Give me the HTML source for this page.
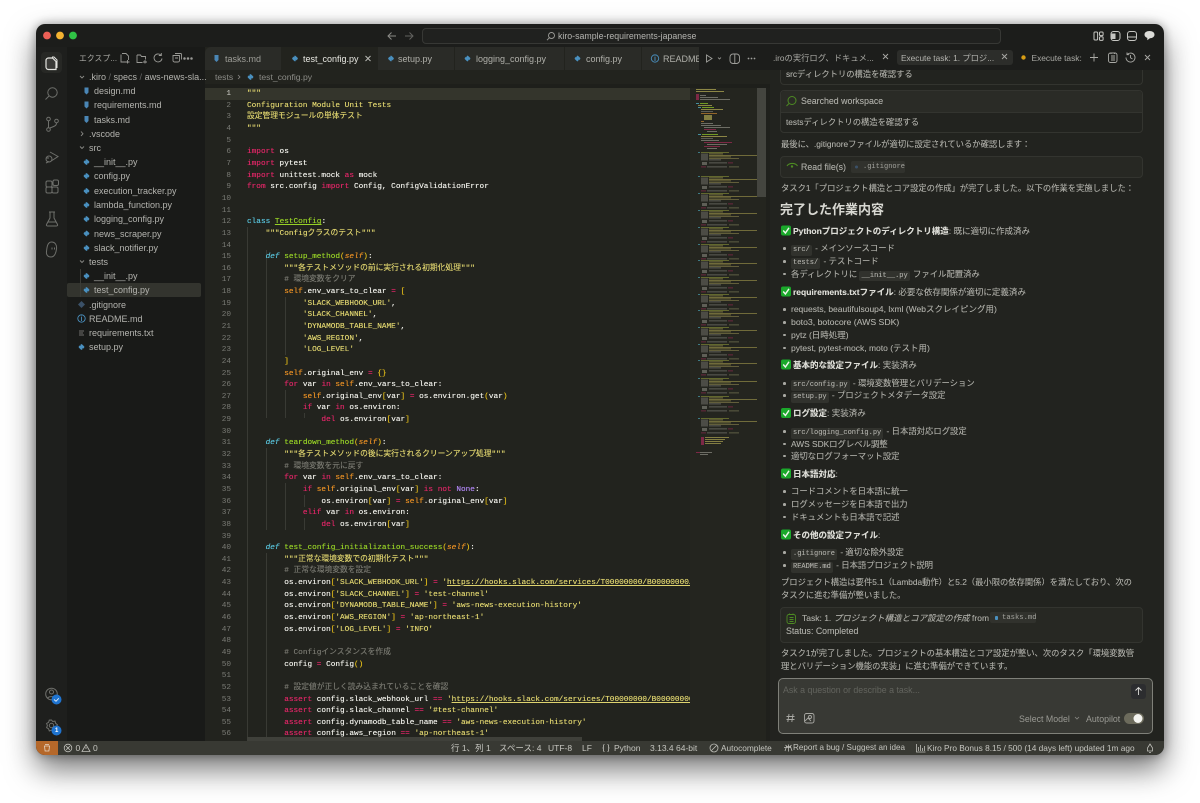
<!DOCTYPE html>
<html lang="ja"><head><meta charset="utf-8"><title>Kiro</title>
<style>
html,body{margin:0;padding:0;background:#fff;width:1200px;height:803px;overflow:hidden}
body{font-family:"Liberation Sans","Noto Sans CJK JP",sans-serif;position:relative}
#w{position:absolute;left:36px;top:24px;width:1128px;height:731px;border-radius:9px;box-shadow:0 14px 30px rgba(0,0,0,.55),0 0 10px rgba(0,0,0,.35);filter:blur(.3px)}
#c{position:absolute;left:-36px;top:-24px;width:1200px;height:803px;clip-path:inset(24px 36px 48px 36px round 9px)}
.a{position:absolute}
.t{position:absolute;white-space:nowrap;line-height:12px}
.f{font-size:9px;color:#b4b4af;height:12px}
.n{font-size:9px;color:#b0b0aa}
.tb{position:absolute;top:47px;height:23px;background:#2a2b27}
pre{margin:0;font-family:"Liberation Mono","Noto Sans CJK JP",monospace;font-size:7.75px;line-height:11.636px;position:absolute;top:89.2px}
#code{left:247px;color:#f0f0ea;width:443px;overflow:hidden;height:651px;text-shadow:0 0 .35px currentColor}
#ln{left:205px;width:26px;text-align:right;color:#7a7b75}
.k{color:#dc2665}.d{color:#58c2da;font-style:italic}.y{color:#58c2da}.g{color:#96d026}.s{color:#ded36e}.o{color:#e88f24}.p{color:#e88f24;font-style:italic}.m{color:#77776f}.b{color:#e0ba18}.v{color:#ad84f0}.u{text-decoration:underline}
.c{position:absolute;white-space:nowrap;line-height:12px;font-size:8.3px;color:#a8a8a2;left:781px;height:12px;text-shadow:0 0 .25px currentColor}
.c b{color:#dcdcd6;font-weight:700}
.h{left:793px;font-size:8.5px}
.l{left:791px;font-size:8.35px}
.l:before{content:"";position:absolute;left:-8px;top:5px;width:2.6px;height:2.6px;border-radius:50%;background:#a8a8a2}
.e{display:inline-block;font-family:"Liberation Mono",monospace;font-size:7px;background:#31322d;color:#a8a8a2;padding:0 2px;border-radius:2px;line-height:10.500px;margin-right:1px}
.st{position:absolute;top:742px;line-height:12px;font-size:8.5px;color:#c6c6c0;white-space:nowrap}
.ig{position:absolute;width:1px;background:#393a34}
.bx{position:absolute;left:780px;width:361px;border:1px solid #33342f;border-radius:4px;background:#272823}
svg{position:absolute;overflow:visible}
</style></head><body>
<div id="w"><div id="c">
<!-- base -->
<div class="a" style="left:36px;top:24px;width:1128px;height:731px;background:#1c1d1b"></div>
<div class="a" style="left:36px;top:47px;width:31px;height:694px;background:#1e1f1d"></div>
<div class="a" style="left:67px;top:47px;width:138px;height:694px;background:#191a18"></div>
<div class="a" style="left:205px;top:47px;width:565px;height:694px;background:#22231e"></div>
<div class="a" style="left:690px;top:84px;width:80px;height:657px;background:#24251f"></div>
<div class="a" style="left:766px;top:84px;width:4px;height:657px;background:#1f201c"></div>
<div class="a" style="left:770px;top:47px;width:394px;height:694px;background:#22231f"></div>

<!-- title bar -->
<svg style="left:0;top:0" width="1200" height="60">
<circle cx="47" cy="35.500" r="3.900" fill="#ec5f56"/><circle cx="60" cy="35.500" r="3.900" fill="#f4b231"/><circle cx="73" cy="35.500" r="3.900" fill="#30c346"/>
<path d="M396 36h-7.500M391.500 32.500l-3.500 3.500 3.500 3.500" fill="none" stroke="#8a8a86" stroke-width="1"/>
<path d="M405 36h7.500M409.500 32.500l3.500 3.500-3.500 3.500" fill="none" stroke="#62625f" stroke-width="1"/>
<rect x="422.500" y="28.500" width="578" height="15" rx="3.500" fill="#20211f" stroke="#373835"/>
<circle cx="551.500" cy="35.500" r="3" fill="none" stroke="#9a9a96" stroke-width=".9"/><path d="M549.300 37.800l-2.300 2.400" stroke="#9a9a96" stroke-width=".9"/>
<g fill="none" stroke="#c6c6c2" stroke-width="1">
<rect x="1094" y="32" width="3.600" height="8" rx="1"/><rect x="1099.500" y="32" width="3.600" height="3.600" rx="1"/><rect x="1099.500" y="36.800" width="3.600" height="3.600" rx="1"/>
<rect x="1111" y="31.500" width="9" height="9" rx="2.500"/><path d="M1111.500 33.500h4v5.500h-4z" fill="#c6c6c2" stroke="none"/>
<rect x="1127.500" y="31.500" width="9" height="9" rx="2.500"/><path d="M1127.500 37h9"/>
</g>
<path d="M1149.500 31c3 0 5 1.500 5 3.600s-2 3.600-4.600 3.600l-2.600 2v-2.300c-1.700-.6-2.800-1.800-2.800-3.300 0-2.100 2-3.600 5-3.600z" fill="#dcdcd8"/>
</svg>
<div class="t" style="left:558px;top:29.500px;font-size:8.800px;color:#b4b4b0">kiro-sample-requirements-japanese</div>

<!-- activity bar -->
<div class="a" style="left:41px;top:52px;width:21px;height:21px;border-radius:4px;background:#272825"></div>
<svg style="left:0;top:0" width="70" height="760" fill="none" stroke="#6f706c" stroke-width="1">
<path d="M49 58h3.500l3.500 3.500v8h-7.500a2.500 2.500 0 0 1-2.500-2.500v-6.500a2.500 2.500 0 0 1 2.500-2.500z" stroke="#e4e4e0" stroke-width="1.200" fill="#3a3a37"/><path d="M52 57h2l3 3v8" stroke="#e4e4e0"/>
<circle cx="52.500" cy="92.500" r="4.700"/><path d="M49 96l-3.500 3.500"/>
<circle cx="48.500" cy="119" r="1.800"/><circle cx="48.500" cy="129.500" r="1.800"/><circle cx="56.500" cy="121" r="1.800"/><path d="M48.500 121v6.500M56.500 123c0 3-3 3.500-6.500 5"/>
<path d="M50 152l8 4.500-6 4M46 158h3M46 163l3-1.500"/><circle cx="49" cy="159" r="3"/>
<rect x="46" y="181" width="6" height="6" rx="1.500"/><rect x="52" y="187" width="6" height="6" rx="1.500"/><rect x="46" y="187" width="6" height="6" rx="1.500"/><rect x="53" y="180" width="5.500" height="5.500" rx="1.500"/>
<path d="M50 212v6l-3.500 6.500c-.4 1 .2 1.500 1 1.500h9c.8 0 1.400-.5 1-1.500l-3.500-6.500v-6M49 212h6M47.500 222h9"/>
<path d="M51.500 242c3.600 0 5.500 3 5 7-.5 3.500-1.500 8-5.500 8-3 0-5-2-4.500-5.500.4-3.500.8-9.500 5-9.500z"/><path d="M52 247.500v2M54.500 247.500v2"/>
<circle cx="51.500" cy="694" r="5.800"/><circle cx="51.500" cy="692" r="2"/><path d="M47.500 698.500c.6-2.500 7.400-2.500 8 0"/>
<circle cx="51.500" cy="725.500" r="2.200"/><path d="M51.500 720l1.200 1.500 2.300-.4.600 2.200 1.800 1.500-1 2 .5 2.300-2.300.4-1.400 1.600-1.800-.9-2.100.8-.7-2.200-2-1.200.8-2.100-.8-2 2-1.200.7-2.200z"/>
</svg>
<svg style="left:0;top:0" width="70" height="760">
<circle cx="56.500" cy="699.500" r="5" fill="#1f74d0"/><path d="M54 699.500l2 1.800 2.800-3" stroke="#e8eef5" fill="none" stroke-width=".9"/>
<circle cx="56.500" cy="730.500" r="5" fill="#1f74d0"/>
</svg>
<div class="t" style="left:55px;top:724.500px;font-size:6px;color:#fff;font-weight:700">1</div>

<!-- sidebar -->
<div class="t" style="left:79px;top:53px;font-size:7.800px;color:#aaaaa5;letter-spacing:.1px">エクスプ...</div>
<svg style="left:0;top:0" width="205" height="360" fill="none" stroke="#9a9a96" stroke-width=".9">
<path d="M122 53.500h4l2.500 2.500v4M121 54.500v7.500h5M127.500 60v3.500M125.500 62h4"/>
<path d="M137 55h3.500l1 1.500h4v3M137 55v7.500h5.500M145 60v3.500M143 62h4"/>
<path d="M161 55.200a4 4 0 1 0 1 3.300M161.300 53v2.500h-2.500"/>
<path d="M173 55.500h6.500v5a1.500 1.500 0 0 1-1.500 1.500h-3.500a1.500 1.500 0 0 1-1.500-1.500zM175 53.500h5.500a1 1 0 0 1 1 1v5M175 58h3"/>
<path d="M80 76l2 2 2-2M81 131.500l2 2.200-2 2.200M80 146.500l2 2 2-2M80 260.500l2 2 2-2" stroke="#8a8a86"/>
<circle cx="184.500" cy="58.500" r=".8" fill="#9a9a96"/><circle cx="188" cy="58.500" r=".8" fill="#9a9a96"/><circle cx="191.500" cy="58.500" r=".8" fill="#9a9a96"/>
</svg>
<div class="a" style="left:67px;top:283px;width:134px;height:14px;background:#33342e;border-radius:2px"></div>
<div class="a" style="left:80px;top:269px;width:1px;height:28px;background:#3b3c37"></div>
<div class="t f" style="left:89px;top:71px">.kiro<span style="color:#666"> / </span>specs<span style="color:#666"> / </span>aws-news-sla...</div>
<div class="t f" style="left:94px;top:85px">design.md</div>
<div class="t f" style="left:94px;top:99px">requirements.md</div>
<div class="t f" style="left:94px;top:113.500px">tasks.md</div>
<div class="t f" style="left:89px;top:128px">.vscode</div>
<div class="t f" style="left:89px;top:142px">src</div>
<div class="t f" style="left:94px;top:156px">__init__.py</div>
<div class="t f" style="left:94px;top:170px">config.py</div>
<div class="t f" style="left:94px;top:185px">execution_tracker.py</div>
<div class="t f" style="left:94px;top:199px">lambda_function.py</div>
<div class="t f" style="left:94px;top:213px">logging_config.py</div>
<div class="t f" style="left:94px;top:227.500px">news_scraper.py</div>
<div class="t f" style="left:94px;top:242px">slack_notifier.py</div>
<div class="t f" style="left:89px;top:256px">tests</div>
<div class="t f" style="left:94px;top:270px">__init__.py</div>
<div class="t f" style="left:94px;top:284px">test_config.py</div>
<div class="t f" style="left:89px;top:298.500px">.gitignore</div>
<div class="t f" style="left:89px;top:312.500px">README.md</div>
<div class="t f" style="left:89px;top:327px">requirements.txt</div>
<div class="t f" style="left:89px;top:341px">setup.py</div>
<svg style="left:0;top:0;width:0;height:0"><defs>
<g id="py"><rect x="-2.300" y="-2.300" width="4.600" height="4.600" rx="1" transform="rotate(45)" fill="#4a90bf"/><circle cx="-.9" cy="-1.700" r=".4" fill="#1c2a33"/><circle cx=".9" cy="1.700" r=".4" fill="#1c2a33"/></g>
<path id="md" d="M-2-3.500h4v5l-2 2-2-2z" fill="#4a86b5"/>
<g id="ok"><rect x="0" y="0" width="10" height="10" rx="2" fill="#1ba82b"/><path d="M2.200 5l2.200 2.500 3.600-5.200" fill="none" stroke="#f2f6ef" stroke-width="1.400"/></g>
</defs></svg>
<svg style="left:0;top:0" width="205" height="360">
<use href="#md" x="86.500" y="91"/><use href="#md" x="86.500" y="105"/><use href="#md" x="86.500" y="119.500"/>
<use href="#py" x="86.500" y="162"/><use href="#py" x="86.500" y="176"/><use href="#py" x="86.500" y="191"/><use href="#py" x="86.500" y="205"/><use href="#py" x="86.500" y="219"/><use href="#py" x="86.500" y="233.500"/><use href="#py" x="86.500" y="248"/><use href="#py" x="86.500" y="276"/><use href="#py" x="86.500" y="290"/><use href="#py" x="81.500" y="347"/>
<path d="M81.500 301l3.500 3.500-3.500 3.500-3.500-3.500z" fill="#3b5168"/>
<circle cx="81.500" cy="318.500" r="3.700" fill="none" stroke="#4a90bf" stroke-width=".9"/><path d="M81.500 317v4M81.500 315.800v.6" stroke="#4a90bf" stroke-width=".9"/>
<path d="M79 331h5M79 333h4M79 335h5" stroke="#8a8a86" stroke-width=".8"/>
</svg>

<!-- tabs -->
<div class="tb" style="left:205px;width:76px;border-radius:6px 0 0 0"></div>
<div class="tb" style="left:281px;width:97px;background:#22231e"></div>
<div class="tb" style="left:378px;width:76px"></div>
<div class="tb" style="left:455px;width:109px"></div>
<div class="tb" style="left:565px;width:76px"></div>
<div class="tb" style="left:642px;width:57px"></div>
<div class="a" style="left:699px;top:47px;width:71px;height:23px;background:#1c1d1b"></div>
<div class="t n" style="left:225px;top:52.500px;color:#9e9e98">tasks.md</div>
<div class="t n" style="left:303px;top:52.500px;color:#e8e8e2">test_config.py</div>
<div class="t n" style="left:398px;top:52.500px">setup.py</div>
<div class="t n" style="left:476px;top:52.500px">logging_config.py</div>
<div class="t n" style="left:586px;top:52.500px">config.py</div>
<div class="t n" style="left:663px;top:52.500px;width:36px;overflow:hidden">README.md</div>
<svg style="left:0;top:0" width="770" height="90">
<use href="#md" x="216.500" y="58.500"/><use href="#py" x="295" y="58.500"/><use href="#py" x="391" y="58.500"/><use href="#py" x="467.500" y="58.500"/><use href="#py" x="577.500" y="58.500"/>
<circle cx="655" cy="58.500" r="3.700" fill="none" stroke="#4a90bf" stroke-width=".9"/><path d="M655 57v4M655 55.800v.6" stroke="#4a90bf" stroke-width=".9"/>
<path d="M365.500 56l5 5M370.500 56l-5 5" stroke="#c0c0ba" stroke-width=".9"/>
<path d="M706.500 55l5.500 3.500-5.500 3.500z" fill="none" stroke="#a0a09c" stroke-width=".9"/><path d="M718 57.500l1.500 1.500 1.500-1.500" fill="none" stroke="#a0a09c" stroke-width=".8"/>
<rect x="730" y="54" width="9.500" height="9.500" rx="3" fill="none" stroke="#a0a09c" stroke-width=".9"/><path d="M734.800 54v9.500" stroke="#a0a09c" stroke-width=".9"/>
<circle cx="748.500" cy="58.500" r=".9" fill="#a0a09c"/><circle cx="751.500" cy="58.500" r=".9" fill="#a0a09c"/><circle cx="754.500" cy="58.500" r=".9" fill="#a0a09c"/>
<path d="M238 75l2 2-2 2" fill="none" stroke="#8a8a86" stroke-width=".8"/>
<use href="#py" x="250.500" y="77"/>
</svg>
<div class="t" style="left:215px;top:71px;font-size:8.600px;color:#8c8c87">tests</div>
<div class="t" style="left:259px;top:71px;font-size:8.600px;color:#8c8c87">test_config.py</div>
<div class="a" style="left:205px;top:84px;width:565px;height:4px;background:#1e1f1b"></div>

<!-- editor -->
<div class="a" style="left:205px;top:88px;width:485px;height:12px;background:#34352c"></div>
<div class="ig" style="left:247px;top:227px;height:513px"></div>
<div class="ig" style="left:266px;top:250px;height:168px"></div>
<div class="ig" style="left:266px;top:448px;height:82px"></div>
<div class="ig" style="left:266px;top:553px;height:187px"></div>
<div class="ig" style="left:285px;top:297px;height:58px"></div>
<div class="ig" style="left:285px;top:390px;height:28px"></div>
<div class="ig" style="left:304px;top:413px;height:5px"></div>
<div class="ig" style="left:285px;top:483px;height:47px"></div>
<div class="ig" style="left:304px;top:495px;height:12px"></div>
<div class="ig" style="left:304px;top:518px;height:12px"></div>
<pre id="ln"><span style="color:#d0d0ca">1</span>
2
3
4
5
6
7
8
9
10
11
12
13
14
15
16
17
18
19
20
21
22
23
24
25
26
27
28
29
30
31
32
33
34
35
36
37
38
39
40
41
42
43
44
45
46
47
48
49
50
51
52
53
54
55
56</pre>
<pre id="code"><span class="s">"""
Configuration Module Unit Tests
設定管理モジュールの単体テスト
"""</span>

<span class="k">import</span> os
<span class="k">import</span> pytest
<span class="k">import</span> unittest.mock <span class="k">as</span> mock
<span class="k">from</span> src.config <span class="k">import</span> Config, ConfigValidationError


<span class="y">class</span> <span class="g u">TestConfig</span>:
    <span class="s">"""Configクラスのテスト"""</span>

    <span class="d">def</span> <span class="g">setup_method</span><span class="b">(</span><span class="p">self</span><span class="b">)</span>:
        <span class="s">"""各テストメソッドの前に実行される初期化処理"""</span>
        <span class="m"># 環境変数をクリア</span>
        <span class="o">self</span>.env_vars_to_clear <span class="k">=</span> <span class="b">[</span>
            <span class="s">'SLACK_WEBHOOK_URL'</span>,
            <span class="s">'SLACK_CHANNEL'</span>,
            <span class="s">'DYNAMODB_TABLE_NAME'</span>,
            <span class="s">'AWS_REGION'</span>,
            <span class="s">'LOG_LEVEL'</span>
        <span class="b">]</span>
        <span class="o">self</span>.original_env <span class="k">=</span> <span class="b">{}</span>
        <span class="k">for</span> var <span class="k">in</span> <span class="o">self</span>.env_vars_to_clear:
            <span class="o">self</span>.original_env<span class="b">[</span>var<span class="b">]</span> <span class="k">=</span> os.environ.get<span class="b">(</span>var<span class="b">)</span>
            <span class="k">if</span> var <span class="k">in</span> os.environ:
                <span class="k">del</span> os.environ<span class="b">[</span>var<span class="b">]</span>

    <span class="d">def</span> <span class="g">teardown_method</span><span class="b">(</span><span class="p">self</span><span class="b">)</span>:
        <span class="s">"""各テストメソッドの後に実行されるクリーンアップ処理"""</span>
        <span class="m"># 環境変数を元に戻す</span>
        <span class="k">for</span> var <span class="k">in</span> <span class="o">self</span>.env_vars_to_clear:
            <span class="k">if</span> <span class="o">self</span>.original_env<span class="b">[</span>var<span class="b">]</span> <span class="k">is not</span> <span class="v">None</span>:
                os.environ<span class="b">[</span>var<span class="b">]</span> <span class="k">=</span> <span class="o">self</span>.original_env<span class="b">[</span>var<span class="b">]</span>
            <span class="k">elif</span> var <span class="k">in</span> os.environ:
                <span class="k">del</span> os.environ<span class="b">[</span>var<span class="b">]</span>

    <span class="d">def</span> <span class="g">test_config_initialization_success</span><span class="b">(</span><span class="p">self</span><span class="b">)</span>:
        <span class="s">"""正常な環境変数での初期化テスト"""</span>
        <span class="m"># 正常な環境変数を設定</span>
        os.environ<span class="b">[</span><span class="s">'SLACK_WEBHOOK_URL'</span><span class="b">]</span> <span class="k">=</span> <span class="s">'<span class="u">https://hooks.slack.com/services/T00000000/B00000000/XXXXXXXX</span>'</span>
        os.environ<span class="b">[</span><span class="s">'SLACK_CHANNEL'</span><span class="b">]</span> <span class="k">=</span> <span class="s">'test-channel'</span>
        os.environ<span class="b">[</span><span class="s">'DYNAMODB_TABLE_NAME'</span><span class="b">]</span> <span class="k">=</span> <span class="s">'aws-news-execution-history'</span>
        os.environ<span class="b">[</span><span class="s">'AWS_REGION'</span><span class="b">]</span> <span class="k">=</span> <span class="s">'ap-northeast-1'</span>
        os.environ<span class="b">[</span><span class="s">'LOG_LEVEL'</span><span class="b">]</span> <span class="k">=</span> <span class="s">'INFO'</span>

        <span class="m"># Configインスタンスを作成</span>
        config <span class="k">=</span> Config<span class="b">()</span>

        <span class="m"># 設定値が正しく読み込まれていることを確認</span>
        <span class="k">assert</span> config.slack_webhook_url <span class="k">==</span> <span class="s">'<span class="u">https://hooks.slack.com/services/T00000000/B00000000/XXXXXXXX</span>'</span>
        <span class="k">assert</span> config.slack_channel <span class="k">==</span> <span class="s">'#test-channel'</span>
        <span class="k">assert</span> config.dynamodb_table_name <span class="k">==</span> <span class="s">'aws-news-execution-history'</span>
        <span class="k">assert</span> config.aws_region <span class="k">==</span> <span class="s">'ap-northeast-1'</span></pre>
<div class="a" style="left:247px;top:737px;width:335px;height:4px;background:#3f403a"></div>

<!-- minimap -->
<svg style="left:0;top:0" width="770" height="480">
<defs><g id="mb">
<rect x="698" y="0" width="2" height=".8" fill="#52b9d0"/><rect x="701" y="0" width="28" height=".8" fill="#8f9a3a"/>
<rect x="701" y="1.500" width="7" height="7" fill="#5c5c55"/>
<rect x="709" y="1.500" width="14" height=".8" fill="#b5ac55"/><rect x="709" y="3" width="48" height=".8" fill="#a8a050"/>
<rect x="709" y="4.500" width="22" height=".8" fill="#a8a050"/><rect x="709" y="6" width="30" height=".8" fill="#8f8a50"/>
<rect x="709" y="7.500" width="12" height=".8" fill="#8a8a80"/>
<rect x="702" y="10" width="5" height="3" fill="#77776e"/><rect x="709" y="10.500" width="18" height=".8" fill="#8a8a80"/><rect x="728" y="10.500" width="5" height=".8" fill="#a02a55"/>
<rect x="701" y="14.500" width="5" height=".8" fill="#a02a55"/><rect x="707" y="14.500" width="20" height=".8" fill="#8a8a80"/><rect x="729" y="14.500" width="10" height=".8" fill="#8a8a60"/>
</g></defs>
<g opacity=".72">
<rect x="696" y="89" width="20" height="1" fill="#b5ac55"/><rect x="696" y="91" width="28" height="1" fill="#b5ac55"/>
<rect x="696" y="94" width="3" height="5" fill="#a02a55"/><rect x="700" y="95" width="6" height="1" fill="#8a8a80"/><rect x="700" y="97" width="18" height="1" fill="#8a8a80"/><rect x="696" y="99" width="3" height="1" fill="#a02a55"/><rect x="700" y="99" width="30" height="1" fill="#8a8a80"/>
<rect x="696" y="103" width="3" height="1" fill="#52b9d0"/><rect x="700" y="103" width="8" height="1" fill="#8fc824"/>
<rect x="698" y="105" width="14" height="1" fill="#b5ac55"/><rect x="698" y="107" width="3" height="1" fill="#52b9d0"/><rect x="702" y="107" width="12" height="1" fill="#8fc824"/>
<rect x="701" y="109" width="22" height="1" fill="#b5ac55"/><rect x="701" y="111" width="12" height="1" fill="#71716a"/><rect x="701" y="113" width="16" height="1" fill="#c08030"/>
<rect x="704" y="115" width="8" height="5" fill="#a8a050"/><rect x="701" y="121" width="3" height="1" fill="#c08030"/><rect x="701" y="123" width="12" height="1" fill="#8a8a80"/><rect x="701" y="125" width="20" height="1" fill="#8a8a80"/><rect x="704" y="127" width="26" height="1" fill="#8a8a80"/><rect x="704" y="129" width="12" height="1" fill="#a02a55"/><rect x="707" y="131" width="10" height="1" fill="#8a8a80"/>
<rect x="698" y="134" width="3" height="1" fill="#52b9d0"/><rect x="702" y="134" width="16" height="1" fill="#8fc824"/><rect x="701" y="136" width="26" height="1" fill="#b5ac55"/><rect x="701" y="138" width="12" height="1" fill="#71716a"/><rect x="701" y="140" width="18" height="1" fill="#8a8a80"/><rect x="704" y="142" width="28" height="1" fill="#a02a55"/><rect x="707" y="144" width="20" height="1" fill="#8a8a80"/><rect x="704" y="146" width="16" height="1" fill="#a02a55"/><rect x="707" y="148" width="10" height="1" fill="#8a8a80"/>
<use href="#mb" y="152"/><use href="#mb" y="176"/><use href="#mb" y="193"/><use href="#mb" y="210"/><use href="#mb" y="227"/><use href="#mb" y="244"/><use href="#mb" y="260"/><use href="#mb" y="277"/><use href="#mb" y="294"/><use href="#mb" y="310"/><use href="#mb" y="327"/><use href="#mb" y="344"/><use href="#mb" y="360"/><use href="#mb" y="378"/><use href="#mb" y="396"/><use href="#mb" y="418"/>
<rect x="701" y="437" width="3" height="8" fill="#a02a55"/><rect x="705" y="437" width="24" height="1" fill="#a8a050"/><rect x="705" y="439" width="20" height="1" fill="#a8a050"/><rect x="705" y="441" width="18" height="1" fill="#a8a050"/><rect x="705" y="443" width="16" height="1" fill="#a8a050"/>
<rect x="696" y="452" width="4" height="1" fill="#a02a55"/><rect x="700" y="452" width="12" height="1" fill="#8a8a80"/><rect x="700" y="454" width="8" height="1" fill="#8a8a80"/>
</g>
<rect x="757" y="88" width="9" height="109" fill="#44453f"/>
</svg>

<!-- chat tabs -->
<div class="a" style="left:770px;top:47px;width:394px;height:23px;background:#1c1d1b"></div>
<div class="a" style="left:897px;top:50px;width:116px;height:15px;border-radius:3px;background:#2c2d2a"></div>
<div class="t" style="left:773px;top:51.500px;font-size:8.300px;color:#a9a9a4">.iroの実行ログ、ドキュメ...</div>
<div class="t" style="left:901px;top:51.500px;font-size:8.300px;color:#b4b4af">Execute task: 1. プロジ...</div>
<div class="t" style="left:1031.500px;top:51.500px;font-size:8.400px;color:#a9a9a4">Execute task:</div>
<svg style="left:0;top:0" width="1164" height="80" fill="none" stroke="#aaaaa6" stroke-width=".9">
<path d="M883 54l5 5M888 54l-5 5M1002 54l5 5M1007 54l-5 5"/>
<circle cx="1023.500" cy="57.500" r="2.200" fill="#d69c14" stroke="none"/>
<path d="M1094 53.500v8M1090 57.500h8"/>
<rect x="1108.500" y="53" width="8.500" height="9.500" rx="2"/><path d="M1111 56h4M1111 58h4M1111 60h4M1111 52.500v1.500M1114.500 52.500v1.500"/>
<path d="M1126 57.500a4.500 4.500 0 1 0 1.500-3.300M1127 52.500v2.200h2.200M1130.500 55v2.800l2 1.200"/>
<path d="M1145 55l5 5M1150 55l-5 5"/>
</svg>

<!-- chat -->
<div class="bx" style="top:70px;height:14px;border-top:none;border-radius:0 0 4px 4px;background:#22231f"></div>
<div class="c" style="left:786px;top:68px">srcディレクトリの構造を確認する</div>
<div class="bx" style="top:90px;height:41px;background:#22231f"></div>
<div class="a" style="left:781px;top:91px;width:361px;height:21px;background:#2a2b26;border-radius:4px 4px 0 0;border-bottom:1px solid #33342f"></div>
<div class="c" style="left:801px;top:95px;font-size:8.800px">Searched workspace</div>
<div class="c" style="left:786px;top:116px">testsディレクトリの構造を確認する</div>
<div class="c" style="top:138px">最後に、.gitignoreファイルが適切に設定されているか確認します：</div>
<div class="bx" style="top:156px;height:20px;background:#272823"></div>
<div class="c" style="left:801px;top:161px;font-size:8.800px">Read file(s)</div>
<div class="a" style="left:851px;top:161px;width:54px;height:12px;background:#31322d;border-radius:2px"></div>
<div class="t" style="left:863px;top:161px;font-family:'Liberation Mono',monospace;font-size:7px;color:#a4a49e">.gitignore</div>
<svg style="left:0;top:0" width="1164" height="190" fill="none" stroke="#4d8a23" stroke-width="1">
<circle cx="792" cy="100.500" r="4"/><path d="M789 103.500l-2.500 2.500"/>
<path d="M787 166c2-3.400 8.500-3.400 10.500 0" stroke-width="1.100"/><circle cx="792" cy="166.500" r="1.200" fill="#4d8a23" stroke="none"/>
<circle cx="856.500" cy="167" r="1.500" fill="#3b5168" stroke="none"/>
</svg>
<div class="c" style="top:182px">タスク1「プロジェクト構造とコア設定の作成」が完了しました。以下の作業を実施しました：</div>
<div class="t" style="left:780px;top:204px;font-size:13px;font-weight:700;color:#d8d8d2">完了した作業内容</div>

<svg style="left:0;top:0" width="800" height="560">
<use href="#ok" x="781" y="225.500"/><use href="#ok" x="781" y="286.500"/><use href="#ok" x="781" y="359.500"/><use href="#ok" x="781" y="408"/><use href="#ok" x="781" y="468.500"/><use href="#ok" x="781" y="529.500"/>
</svg>
<div class="c h" style="top:224.500px"><b>Pythonプロジェクトのディレクトリ構造</b>: 既に適切に作成済み</div>
<div class="c l" style="top:242px"><span class="e">src/</span> - メインソースコード</div>
<div class="c l" style="top:255px"><span class="e">tests/</span> - テストコード</div>
<div class="c l" style="top:267.500px">各ディレクトリに <span class="e">__init__.py</span> ファイル配置済み</div>
<div class="c h" style="top:285.500px"><b>requirements.txtファイル</b>: 必要な依存関係が適切に定義済み</div>
<div class="c l" style="top:303px;font-size:8.500px">requests, beautifulsoup4, lxml (Webスクレイピング用)</div>
<div class="c l" style="top:316px;font-size:8.700px">boto3, botocore (AWS SDK)</div>
<div class="c l" style="top:328.500px;font-size:8.500px">pytz (日時処理)</div>
<div class="c l" style="top:341.500px;font-size:8.500px">pytest, pytest-mock, moto (テスト用)</div>
<div class="c h" style="top:358.500px"><b>基本的な設定ファイル</b>: 実装済み</div>
<div class="c l" style="top:377px"><span class="e">src/config.py</span> - 環境変数管理とバリデーション</div>
<div class="c l" style="top:389px"><span class="e">setup.py</span> - プロジェクトメタデータ設定</div>
<div class="c h" style="top:407px"><b>ログ設定</b>: 実装済み</div>
<div class="c l" style="top:425px"><span class="e">src/logging_config.py</span> - 日本語対応ログ設定</div>
<div class="c l" style="top:437.500px">AWS SDKログレベル調整</div>
<div class="c l" style="top:449.500px">適切なログフォーマット設定</div>
<div class="c h" style="top:467.500px"><b>日本語対応</b>:</div>
<div class="c l" style="top:485px">コードコメントを日本語に統一</div>
<div class="c l" style="top:498px">ログメッセージを日本語で出力</div>
<div class="c l" style="top:510.500px">ドキュメントも日本語で記述</div>
<div class="c h" style="top:528.500px"><b>その他の設定ファイル</b>:</div>
<div class="c l" style="top:546px"><span class="e">.gitignore</span> - 適切な除外設定</div>
<div class="c l" style="top:559px"><span class="e">README.md</span> - 日本語プロジェクト説明</div>
<div class="c" style="top:576px">プロジェクト構造は要件5.1（Lambda動作）と5.2（最小限の依存関係）を満たしており、次の</div>
<div class="c" style="top:589px">タスクに進む準備が整いました。</div>
<div class="bx" style="top:607px;height:34px"></div>
<svg style="left:0;top:0" width="800" height="640" fill="none" stroke="#4d8a23" stroke-width=".9">
<rect x="787" y="614.500" width="8.500" height="9" rx="2"/><path d="M789.500 617.500h4M789.500 619.500h4M789.500 621.500h4M789.500 613.500v1.500M793 613.500v1.500"/>
</svg>
<div class="c" style="left:802px;top:612px;font-size:8.500px">Task: 1. <i>プロジェクト構造とコア設定の作成</i> from</div>
<div class="a" style="left:990px;top:612px;width:46px;height:11px;background:#31322d;border-radius:2px"></div>
<div class="a" style="left:995px;top:615.500px;width:3px;height:4px;background:#4a90bf;border-radius:1px"></div>
<div class="t" style="left:1002px;top:611.500px;font-family:'Liberation Mono',monospace;font-size:7.200px;color:#a4a49e">tasks.md</div>
<div class="c" style="left:786px;top:625px;font-size:8.800px">Status: Completed</div>
<div class="c" style="top:647px">タスク1が完了しました。プロジェクトの基本構造とコア設定が整い、次のタスク「環境変数管</div>
<div class="c" style="top:660px">理とバリデーション機能の実装」に進む準備ができています。</div>

<!-- input -->
<div class="a" style="left:778px;top:678px;width:373px;height:54px;background:#383934;border:1px solid #7f8079;border-radius:5px"></div>
<div class="t" style="left:783px;top:684px;font-size:8.800px;color:#63645e">Ask a question or describe a task...</div>
<div class="a" style="left:1131px;top:684px;width:15px;height:15px;background:#2c2d2f;border-radius:3px"></div>
<svg style="left:0;top:0" width="1164" height="740" fill="none" stroke="#a8a8a3" stroke-width=".9">
<path d="M1138.500 695v-7M1135.500 690.500l3-3 3 3" stroke="#dcdcd8"/>
<path d="M789 714l-1.200 8M793 714l-1.200 8M786.500 716.500h8M786.500 719.500h8"/>
<rect x="804.500" y="713.500" width="9.500" height="9.500" rx="2"/><circle cx="810" cy="717" r="1.500"/><path d="M805 721l3-3 3 3"/>
<path d="M1075 717l2 2 2-2" stroke="#8a8a85" stroke-width=".8"/>
<rect x="1124" y="713" width="20" height="11" rx="5.500" fill="#6c6b5c" stroke="none"/><circle cx="1138" cy="718.500" r="4.500" fill="#f4f4f0" stroke="none"/>
</svg>
<div class="t" style="left:1019px;top:712.500px;font-size:8.800px;color:#9a9a94">Select Model</div>
<div class="t" style="left:1086px;top:712.500px;font-size:8.800px;color:#9a9a94">Autopilot</div>

<!-- status -->
<div class="a" style="left:36px;top:741px;width:1128px;height:14px;background:#383933"></div>
<div class="a" style="left:36px;top:741px;width:22px;height:14px;background:#b5682a"></div>
<svg style="left:0;top:0" width="1164" height="755" fill="none" stroke="#c0c0ba" stroke-width=".8">
<path d="M45 744.500h4M44.500 746h5l-.6 5h-3.800z" stroke="#e6d8c8"/>
<circle cx="68" cy="748" r="3.800"/><path d="M66.200 746.200l3.600 3.600M69.800 746.200l-3.600 3.600"/>
<path d="M86 744.500l4 7h-8z"/><path d="M86 747v2"/>
<path d="M604.500 744.500c-1.500 0-1 1.500-1 2.500s-.5 1-1 1c.5 0 1 .2 1 1s-.5 2.500 1 2.500M607.500 744.500c1.500 0 1 1.500 1 2.500s.5 1 1 1c-.5 0-1 .2-1 1s.5 2.500-1 2.500"/>
<circle cx="714" cy="748" r="4"/><path d="M711.500 750.500l5-5"/>
<path d="M784 747.500h7M785 751l1.500-4.500h4l1.500 4.500M788.500 744.500v7M785.500 745l1.500 1.500M791.500 745l-1.500 1.500"/>
<path d="M916.500 744v8h9M918.500 751v-4M920.500 751v-6M922.500 751v-3M924.500 751v-5"/>
<path d="M1150 744l2.500 4v3h-5v-3zM1149 752.500h2"/>
</svg>
<div class="st" style="left:75.500px">0</div><div class="st" style="left:93px">0</div>
<div class="st" style="left:451px">行 1、列 1</div>
<div class="st" style="left:499px">スペース: 4</div>
<div class="st" style="left:548px">UTF-8</div>
<div class="st" style="left:582px">LF</div>
<div class="st" style="left:614px">Python</div>
<div class="st" style="left:650px">3.13.4 64-bit</div>
<div class="st" style="left:721px;font-size:8.300px">Autocomplete</div>
<div class="st" style="left:793px;font-size:8.100px">Report a bug / Suggest an idea</div>
<div class="st" style="left:927px;font-size:8.300px">Kiro Pro Bonus 8.15 / 500 (14 days left) updated 1m ago</div>
</div></div>
</body></html>
